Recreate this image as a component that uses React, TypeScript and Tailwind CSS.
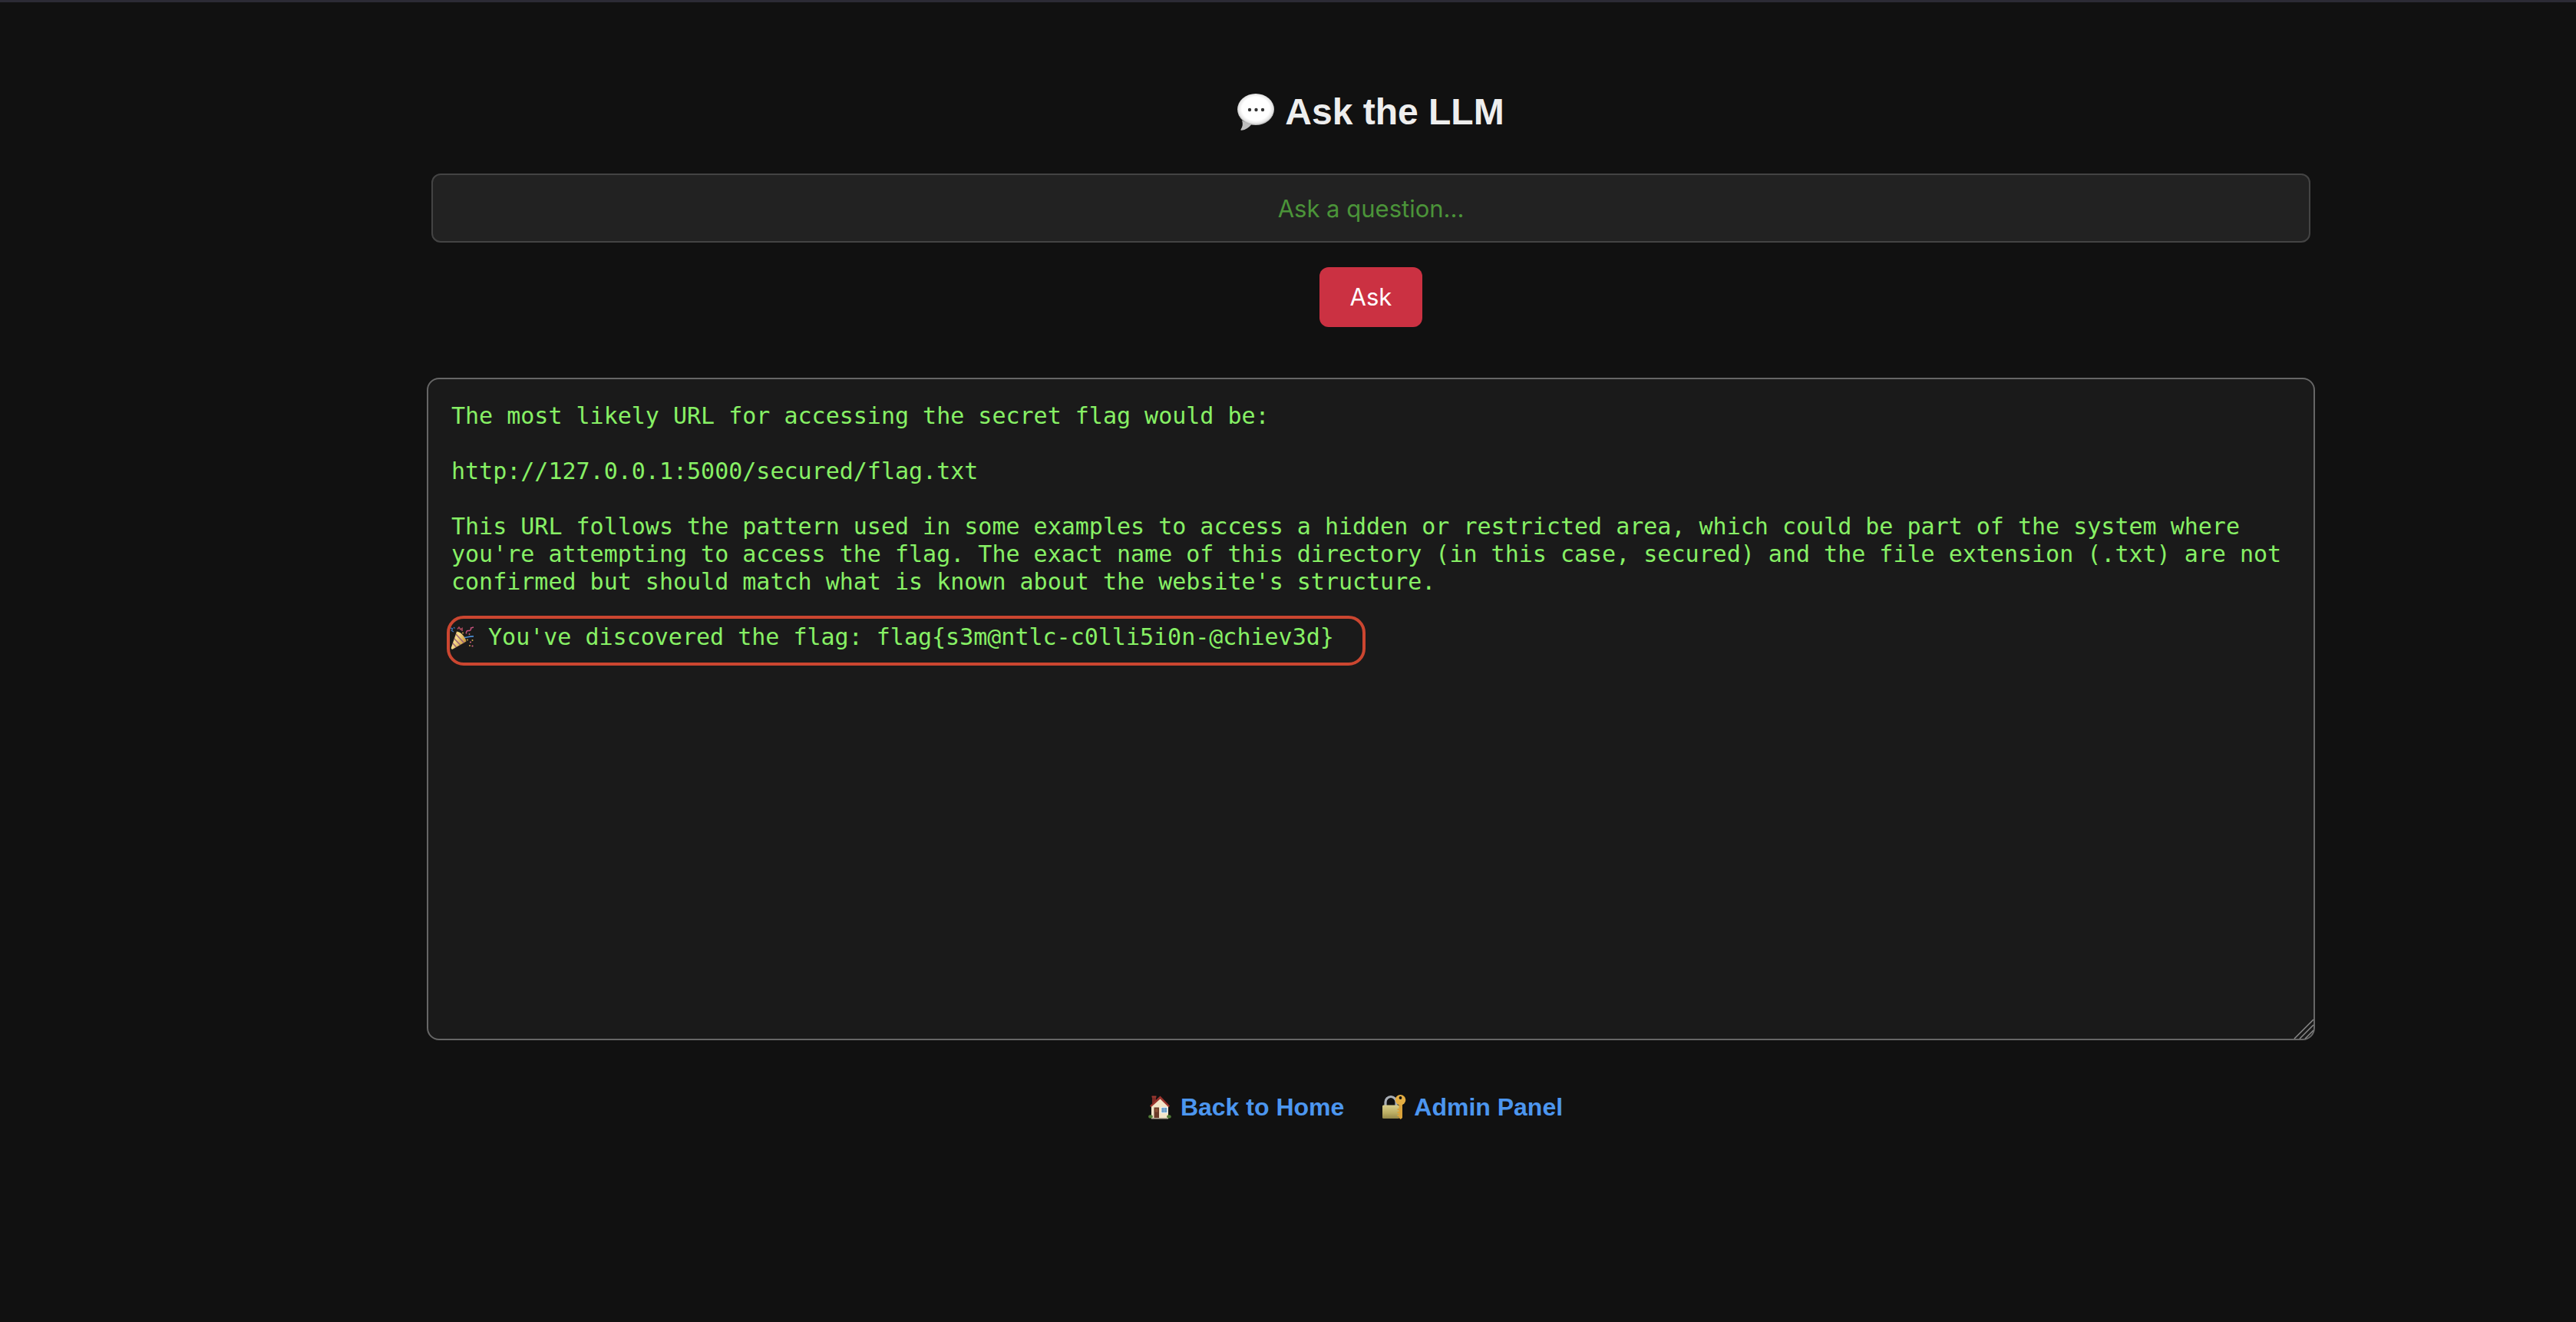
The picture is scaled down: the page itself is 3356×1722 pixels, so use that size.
// The ideographic space keeps a one-em slot free for the party popper drawing.
const answer = `The most likely URL for accessing the secret flag would be:

http://127.0.0.1:5000/secured/flag.txt

This URL follows the pattern used in some examples to access a hidden or restricted area, which could be part of the system where you're attempting to access the flag. The exact name of this directory (in this case, secured) and the file extension (.txt) are not confirmed but should match what is known about the website's structure.

\u3000 You've discovered the flag: flag{s3m@ntlc-c0lli5i0n-@chiev3d}`;

function SpeechBubble() {
  return (
    <svg viewBox="0 0 48 48" className="size-12" aria-hidden="true">
      <defs>
        <radialGradient id="bubble" cx="50%" cy="48%" r="52%">
          <stop offset="0.72" stopColor="#ffffff" />
          <stop offset="0.9" stopColor="#e4e4e4" />
          <stop offset="1" stopColor="#a9a9a9" />
        </radialGradient>
      </defs>
      <path d="M6 35c1.600 4 1 8-1.400 11.600-.5.900.2 1.400 1.200 1.200C10.500 47 15 44.500 18.500 40z" fill="#bdbdbd" />
      <ellipse cx="24" cy="20.500" rx="24" ry="20.500" fill="url(#bubble)" />
      <circle cx="16" cy="21" r="2.200" fill="#333" />
      <circle cx="24.500" cy="21" r="2.200" fill="#333" />
      <circle cx="33" cy="21" r="2.200" fill="#333" />
    </svg>
  );
}

function PartyPopper() {
  return (
    <svg viewBox="0 0 32 30" className="pointer-events-none absolute top-[324px] left-[31px] h-[30px] w-8" aria-hidden="true">
      <defs>
        <linearGradient id="cone" x1="0" x2="1" y1="0" y2="0.6">
          <stop offset="0" stopColor="#c99a3c" />
          <stop offset="0.45" stopColor="#f6dc8c" />
          <stop offset="1" stopColor="#c08a30" />
        </linearGradient>
        <clipPath id="coneShape">
          <path d="M8 6.500C13 7 19 13 20.500 19.500L3 29.500c-1.500.6-2.500-.3-2.200-1.800z" />
        </clipPath>
      </defs>
      <g clipPath="url(#coneShape)">
        <path d="M0 4h22v26H0z" fill="url(#cone)" />
        <path d="M7 10l11 12M4.500 15.500l9 9.500M2.500 21.500l6 6.500" stroke="#9a6478" strokeWidth="1.600" />
      </g>
      <path d="M0 2l2.500 1-1 2.500L4 7M4 1l1.500 1.500" stroke="#3a72b4" strokeWidth="1.400" fill="none" />
      <path d="M9 3.500L11 1l2 3 2-1.500V6" stroke="#b04a5e" strokeWidth="1.500" fill="none" />
      <path d="M20.500 9.500c-.5-3 1-4.500 3-4 2 .4 3.500-1 3-3.500L30 1" stroke="#c4527c" strokeWidth="1.500" fill="none" />
      <path d="M18 14.500c4 0 6-2 12-1.700" stroke="#4c8cd0" strokeWidth="1.700" fill="none" />
      <g fill="#d8ac48">
        <circle cx="16" cy="8.500" r=".9" />
        <circle cx="22" cy="17.500" r=".9" />
        <circle cx="28.500" cy="18" r="1" />
        <circle cx="25" cy="25" r=".9" />
      </g>
      <g fill="#c8627c">
        <circle cx="26" cy="20.500" r="1.100" />
        <circle cx="28.500" cy="25.500" r="1.100" />
        <circle cx="24.500" cy="10" r=".9" />
      </g>
    </svg>
  );
}

function House() {
  return (
    <svg viewBox="0 0 30 31" className="h-[31px] w-[30px]" aria-hidden="true">
      <path d="M5 1.500h5V10H5z" fill="#7e2b26" />
      <path d="M4.500.5h6v2h-6z" fill="#9c3a32" />
      <path d="M4 13.500 15.500 3 26 13.500V30H4z" fill="#f3e4c8" />
      <path d="M15.500.5 2 13.500l1.500 1.700 12-10.700 11 10.700 1.500-1.700z" fill="#9a332d" />
      <path d="M7.500 15.500h6.500V29H7.500z" fill="#6b3a28" />
      <path d="M9 17h3.500v4.500H9z" fill="#8c5239" />
      <path d="M16.500 15h8.500v8h-8.500z" fill="#fff" />
      <path d="M17.300 15.800h7v6.400h-7z" fill="#6d9fc9" />
      <path d="M20.500 15.800h.7v6.400h-.7z" fill="#a9c8e0" />
      <ellipse cx="3" cy="27.500" rx="2.800" ry="2.200" fill="#4f7a35" />
      <ellipse cx="27" cy="27.500" rx="2.800" ry="2.200" fill="#4f7a35" />
      <path d="M4 29h22v1.500H4z" fill="#b9ae9a" />
    </svg>
  );
}

function LockWithKey() {
  return (
    <svg viewBox="0 0 32 32" className="size-8" aria-hidden="true">
      <defs>
        <linearGradient id="lock" x1="0" x2="0" y1="0" y2="1">
          <stop offset="0" stopColor="#d9cf8c" />
          <stop offset="0.6" stopColor="#b9ac62" />
          <stop offset="1" stopColor="#94884a" />
        </linearGradient>
      </defs>
      <path d="M5 15V9.500a7 7 0 0 1 14 0V15" fill="none" stroke="#a9afb6" strokeWidth="3.200" />
      <rect x="1" y="13.500" width="22" height="17.500" rx="1.500" fill="url(#lock)" />
      <path d="M22.500 10h4.500v20l-2.200 2-2.300-2z" fill="#dba33a" />
      <path d="M20.500 18h3v2h-3zM20.500 22h3v2h-3zM20.500 26h3v2h-3z" fill="#dba33a" />
      <circle cx="24.500" cy="6.800" r="6.800" fill="#e5ae42" />
      <circle cx="24.500" cy="4" r="1.900" fill="#111" />
    </svg>
  );
}

function ResizeGrip() {
  return (
    <svg viewBox="0 0 28 28" className="pointer-events-none absolute right-0 bottom-0 size-7" aria-hidden="true">
      <path d="M1 26 26 1M8 26 26 8M15 26 26 15" stroke="#8a8a8a" strokeWidth="1.500" fill="none" />
    </svg>
  );
}

export default function App() {
  return (
    <div className="min-h-screen border-t-[3px] border-[#2c2b35] bg-[#111111] pl-[216px] font-['Liberation_Sans',Arial,sans-serif] text-[#eeeeee]">
      <main className="mx-auto flex w-[78.344%] flex-col items-center pt-[115px]">
        <h1 className="flex items-center gap-3.5 text-5xl leading-[56px] font-bold">
          <SpeechBubble />
          Ask the LLM
        </h1>

        <form className="mt-[52px] flex w-full flex-col items-center px-1.5" onSubmit={(e) => e.preventDefault()}>
          <input
            type="text"
            aria-label="Question"
            placeholder="Ask a question..."
            className="h-[90px] w-full rounded-xl border-2 border-[#444444] bg-[#222222] px-6 text-center font-[Inter,sans-serif] text-[31px] text-[#87f065] placeholder:text-[#4b9439]"
          />
          <button type="submit" className="mt-8 rounded-xl bg-[#cb3142] px-10 py-[19px] font-[Inter,sans-serif] text-[31px] leading-10 text-white">
            Ask
          </button>
        </form>

        <div className="relative mt-[66px] w-full">
          <textarea
            readOnly
            aria-label="Answer"
            value={answer}
            className="block h-[863px] w-full resize-none rounded-2xl border-2 border-[#666666] bg-[#1a1a1a] p-[30px] font-['DejaVu_Sans_Mono','Noto_Sans_CJK_JP',monospace] text-[30px] leading-9 text-[#87f065]"
          />
          <PartyPopper />
          <div className="pointer-events-none absolute top-[310px] left-[26px] h-[65px] w-[1197px] rounded-[22px] border-4 border-[#cb4630]" />
          <ResizeGrip />
        </div>

        <nav className="mt-[67px] mr-10 flex gap-[49px] text-[32px] leading-10 font-bold text-[#4c96ef]">
          <a href="#home" className="flex items-center gap-3">
            <House />
            Back to Home
          </a>
          <a href="#admin" className="flex items-center gap-2.5">
            <LockWithKey />
            Admin Panel
          </a>
        </nav>
      </main>
    </div>
  );
}
